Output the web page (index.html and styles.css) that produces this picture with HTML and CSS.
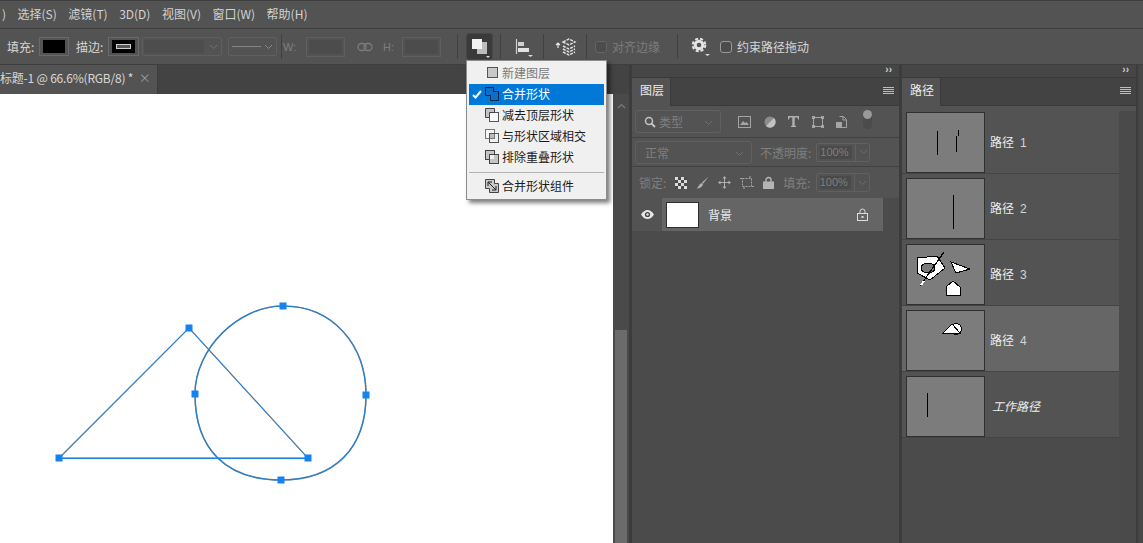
FILE: index.html
```html
<!DOCTYPE html>
<html lang="zh-CN">
<head>
    <meta charset="UTF-8">
    <title>Photoshop</title>
    <link rel="stylesheet" href="styles.css">
</head>
<body>

<div class="app">

    <!-- 菜单栏 -->
    <div class="menubar">
        <span>)</span>
        <span>选择(S)</span>
        <span>滤镜(T)</span>
        <span>3D(D)</span>
        <span>视图(V)</span>
        <span>窗口(W)</span>
        <span>帮助(H)</span>
    </div>

    <!-- 选项栏 -->
    <div class="optbar">
        <span class="opt_label">填充:</span>
        <span class="swatch fill_swatch"><i></i></span>
        <span class="opt_label stroke_label">描边:</span>
        <span class="swatch stroke_swatch"><i></i></span>
        <span class="combo width_combo"><b></b><svg width="9" height="6" viewBox="0 0 9 6"><path d="M1 1l3.500 3.500L8 1" fill="none" stroke="#737373"/></svg></span>
        <span class="combo line_combo"><em></em><svg width="9" height="6" viewBox="0 0 9 6"><path d="M1 1l3.500 3.500L8 1" fill="none" stroke="#8a8a8a"/></svg></span>
        <span class="sep sep_w"></span>
        <span class="dim_label w_label">W:</span>
        <span class="dim_input w_input"></span>
        <svg class="link_icon" width="16" height="10" viewBox="0 0 16 10"><g fill="none" stroke="#7c7c7c" stroke-width="1.300"><rect x="1" y="1.500" width="8" height="7" rx="3.500"/><rect x="7" y="1.500" width="8" height="7" rx="3.500"/></g></svg>
        <span class="dim_label h_label">H:</span>
        <span class="dim_input h_input"></span>
        <span class="sep sep_h"></span>
        <span class="tool_btn">
            <svg width="27" height="27" viewBox="0 0 27 27"><rect x="11" y="9" width="10" height="12" fill="#bdbdbd"/><rect x="6" y="6" width="10" height="10" fill="#f2f2f2"/><path d="M20 23h4l-2 2z" fill="#ddd"/></svg>
        </span>
        <span class="sep sep_a"></span>
        <svg class="align_icon" width="18" height="20" viewBox="0 0 18 20"><path d="M1.500 2v15" stroke="#cfcfcf" stroke-width="1.200"/><rect x="3" y="5" width="6" height="4" fill="#cfcfcf"/><rect x="3" y="11" width="11" height="4" fill="#e2e2e2"/><path d="M13 18h5l-2.500 2z" fill="#ddd"/></svg>
        <span class="sep sep_b"></span>
        <svg class="stack_icon" width="22" height="20" viewBox="0 0 22 20"><path d="M3 6v5M1 8l2-2 2 2" fill="none" stroke="#e6e6e6" stroke-width="1.200"/><g fill="none" stroke="#e2e2e2" stroke-width="1.400" stroke-dasharray="3 1"><path d="M8 5l6-3 6 3-6 3z"/><path d="M8 9l6 3 6-3"/><path d="M8 12l6 3 6-3"/><path d="M8 15l6 3 6-3"/></g></svg>
        <span class="sep sep_c"></span>
        <span class="check dis_check"></span>
        <span class="check_text dis_text">对齐边缘</span>
        <span class="sep sep_d"></span>
        <svg class="gear_icon" width="20" height="20" viewBox="0 0 20 20"><circle cx="8" cy="8" r="3.800" fill="none" stroke="#e4e4e4" stroke-width="3"/><circle cx="8" cy="8" r="6.300" fill="none" stroke="#e4e4e4" stroke-width="2" stroke-dasharray="3 2"/><path d="M14 17h5l-2.500 2z" fill="#ddd"/></svg>
        <span class="check on_check"></span>
        <span class="check_text">约束路径拖动</span>
    </div>

    <div class="workspace">

        <!-- 文档区 -->
        <div class="doc">
            <div class="doc_tabs">
                <div class="doc_tab">标题-1 @ 66.6%(RGB/8) * <span class="doc_close">×</span></div>
            </div>
            <div class="doc_body">
                <div class="canvas">
                    <svg class="drawing" width="613" height="449" viewBox="0 94 613 449">
                        <path d="M59 458L189 328 308 458Z" fill="none" stroke="#8a8a8a" stroke-width="1.300"/>
                        <path d="M283 306C333 306 366 345 366 395 366 448 335 480 281 480 226 480 195 449 195 394 195 349 238 306 283 306Z" fill="none" stroke="#8a8a8a" stroke-width="1.600"/>
                        <path d="M59 458.500H308" fill="none" stroke="#1c80dc" stroke-width="1.200"/>
                        <path d="M59 458.500L189 328 308 458.500" fill="none" stroke="#1c80dc" stroke-width=".9"/>
                        <path d="M283 306C333 306 366 345 366 395 366 448 335 480 281 480 226 480 195 449 195 394 195 349 238 306 283 306Z" fill="none" stroke="#1c80dc" stroke-width="1.100"/>
                        <g fill="#1583ef">
                            <rect x="185.500" y="324.500" width="7" height="7"/>
                            <rect x="55.500" y="454.500" width="7" height="7"/>
                            <rect x="304.500" y="454.500" width="7" height="7"/>
                            <rect x="279.500" y="302.500" width="7" height="7"/>
                            <rect x="362.500" y="391.500" width="7" height="7"/>
                            <rect x="277.500" y="476.500" width="7" height="7"/>
                            <rect x="191.500" y="390.500" width="7" height="7"/>
                        </g>
                    </svg>
                </div>
                <div class="doc_scroll">
                    <svg class="scroll_up" width="9" height="6" viewBox="0 0 9 6"><path d="M1 5l3.500-3.500L8 5" fill="none" stroke="#7a7a7a" stroke-width="1.200"/></svg>
                    <div class="scroll_thumb"></div>
                </div>
            </div>
        </div>

        <!-- 图层面板 -->
        <div class="panel layers_panel">
            <div class="dock_strip"><span>››</span></div>
            <div class="panel_tabs">
                <div class="panel_tab">图层</div>
                <div class="panel_menu"><i></i><i></i><i></i><i></i></div>
            </div>
            <div class="layer_opts">
                <div class="opt_row filter_row">
                    <div class="pick filter_pick">
                        <svg width="12" height="12" viewBox="0 0 12 12"><circle cx="5" cy="5" r="3.500" fill="none" stroke="#c4c4c4" stroke-width="1.500"/><path d="M7.500 7.500L11 11" stroke="#c4c4c4" stroke-width="2"/></svg>
                        <span>类型</span>
                        <svg class="pick_arrow" width="9" height="6" viewBox="0 0 9 6"><path d="M1 1l3.500 3.500L8 1" fill="none" stroke="#6e6e6e"/></svg>
                    </div>
                    <div class="filter_icons">
                        <svg width="13" height="12" viewBox="0 0 13 12"><rect x=".5" y=".5" width="12" height="11" fill="none" stroke="#a5a5a5"/><path d="M2 9l3-4 2 2 1.500-1L11 9z" fill="#a5a5a5"/></svg>
                        <svg width="12" height="12" viewBox="0 0 12 12"><circle cx="6" cy="6" r="5.500" fill="#8c8c8c"/><path d="M10 2A5.500 5.500 0 0 1 2 10z" fill="#c2c2c2"/></svg>
                        <svg width="11" height="11" viewBox="0 0 11 11"><path d="M0 0h11v3.500H10L9.500 1.500H6.700v8l1.300.5v1H3V10l1.300-.5v-8H1.500L1 3.500H0z" fill="#b0b0b0"/></svg>
                        <svg width="12" height="12" viewBox="0 0 12 12"><rect x="1.500" y="1.500" width="9" height="9" fill="none" stroke="#a5a5a5"/><g fill="#a5a5a5"><rect width="3" height="3"/><rect x="9" width="3" height="3"/><rect y="9" width="3" height="3"/><rect x="9" y="9" width="3" height="3"/></g></svg>
                        <svg width="11" height="12" viewBox="0 0 11 12"><path d="M3.500.5h4l3 3v8h-7" fill="none" stroke="#a5a5a5"/><path d="M7 1v3h3" fill="none" stroke="#a5a5a5"/><rect y="6" width="6" height="6" fill="#a5a5a5"/></svg>
                        <span class="filter_toggle"><i></i></span>
                    </div>
                </div>
                <div class="opt_row blend_row">
                    <div class="pick blend_pick">
                        <span>正常</span>
                        <svg class="pick_arrow" width="9" height="6" viewBox="0 0 9 6"><path d="M1 1l3.500 3.500L8 1" fill="none" stroke="#6e6e6e"/></svg>
                    </div>
                    <span class="dim_text">不透明度:</span>
                    <div class="percent"><span>100%</span><svg width="9" height="6" viewBox="0 0 9 6"><path d="M1 1l3.500 3.500L8 1" fill="none" stroke="#6e6e6e"/></svg></div>
                </div>
                <div class="opt_row lock_row">
                    <span class="dim_text">锁定:</span>
                    <svg class="checker" width="12" height="12" viewBox="0 0 12 12"><rect width="12" height="12" fill="#dcdcdc"/><g fill="#4a4a4a"><rect x="3" width="3" height="3"/><rect x="9" width="3" height="3"/><rect y="3" width="3" height="3"/><rect x="6" y="3" width="3" height="3"/><rect x="3" y="6" width="3" height="3"/><rect x="9" y="6" width="3" height="3"/><rect y="9" width="3" height="3"/><rect x="6" y="9" width="3" height="3"/></g></svg>
                    <svg width="13" height="13" viewBox="0 0 13 13"><path d="M12.500.5L6 6.500 7 8z" fill="#b0b0b0"/><path d="M5.500 7l1.500 1.500C6.500 11 3 12.800.5 12.500 2.500 11.500 2.500 8.500 5.500 7z" fill="#b0b0b0"/></svg>
                    <svg width="13" height="13" viewBox="0 0 13 13"><path d="M6.500 1v11M1 6.500h11" stroke="#b0b0b0"/><path d="M6.500 0l2 2.500h-4zM6.500 13l2-2.500h-4zM0 6.500l2.500 2v-4zM13 6.500l-2.500 2v-4z" fill="#b0b0b0"/></svg>
                    <svg width="14" height="13" viewBox="0 0 14 13"><rect x="2.500" y="2.500" width="9" height="8" fill="none" stroke="#a5a5a5" stroke-dasharray="2 1"/><path d="M0 2.500h2M12 10.500h2M4 11v2M10 0v2" stroke="#a5a5a5"/></svg>
                    <svg width="11" height="13" viewBox="0 0 11 13"><path d="M3 6V4a2.500 2.500 0 0 1 5 0v2" fill="none" stroke="#b4b4b4" stroke-width="1.400"/><rect y="5.500" width="11" height="7.500" fill="#b4b4b4"/></svg>
                    <span class="dim_text">填充:</span>
                    <div class="percent"><span>100%</span><svg width="9" height="6" viewBox="0 0 9 6"><path d="M1 1l3.500 3.500L8 1" fill="none" stroke="#6e6e6e"/></svg></div>
                </div>
            </div>
            <div class="layer_list">
                <div class="layer_item">
                    <div class="layer_eye">
                        <svg width="13" height="9" viewBox="0 0 13 9"><path d="M0 4.500C2 1.500 4 0 6.500 0S11 1.500 13 4.500C11 7.500 9 9 6.500 9S2 7.500 0 4.500z" fill="#e6e6e6"/><circle cx="6.500" cy="4.500" r="2.600" fill="#444"/><circle cx="6.500" cy="4.500" r="1.200" fill="#e6e6e6"/></svg>
                    </div>
                    <div class="layer_row">
                        <span class="layer_thumb"></span>
                        <span class="layer_name">背景</span>
                        <svg class="layer_lock" width="11" height="13" viewBox="0 0 11 13"><path d="M3 5.500V3.500a2.500 2.500 0 0 1 5 0v2" fill="none" stroke="#dcdcdc"/><rect x=".5" y="5.500" width="10" height="7" fill="none" stroke="#dcdcdc"/><rect x="4.500" y="8" width="2" height="2" fill="#dcdcdc"/></svg>
                    </div>
                </div>
            </div>
        </div>

        <!-- 路径面板 -->
        <div class="panel paths_panel">
            <div class="dock_strip"><span>››</span></div>
            <div class="panel_tabs">
                <div class="panel_tab">路径</div>
                <div class="panel_menu"><i></i><i></i><i></i><i></i></div>
            </div>
            <div class="path_body">
                <div class="path_list">
                    <div class="path_row">
                        <svg class="path_thumb" width="77" height="59" viewBox="1 1 77 59"><path d="M31.500 19v24M50.500 24v16M52.500 18v6" stroke="#000"/></svg>
                        <span class="path_name">路径<span class="path_num">1</span></span>
                    </div>
                    <div class="path_row">
                        <svg class="path_thumb" width="77" height="59" viewBox="1 1 77 59"><path d="M47.500 17v34" stroke="#000"/></svg>
                        <span class="path_name">路径<span class="path_num">2</span></span>
                    </div>
                    <div class="path_row">
                        <svg class="path_thumb" width="77" height="59" viewBox="1 1 77 59">
                            <path d="M11 14l20-2 8 12-15 12-13-7z" fill="#fff" stroke="#000"/>
                            <ellipse cx="22" cy="24" rx="7" ry="5" fill="#7a7a7a" stroke="#000"/>
                            <path d="M38 8L14 42" stroke="#000" stroke-width="1.200"/>
                            <path d="M18 37l-3 4" stroke="#fff" stroke-width="2"/>
                            <path d="M45 18l19 7-14 4z" fill="#fff" stroke="#000"/>
                            <path d="M40 51v-8l7-6 7 6v8z" fill="#fff" stroke="#000"/>
                        </svg>
                        <span class="path_name">路径<span class="path_num">3</span></span>
                    </div>
                    <div class="path_row path_active">
                        <svg class="path_thumb" width="77" height="59" viewBox="1 1 77 59">
                            <circle cx="50" cy="19" r="5.500" fill="#fff" stroke="#000"/>
                            <path d="M37 23l9-9 8 9z" fill="#fff" stroke="#000"/>
                        </svg>
                        <span class="path_name">路径<span class="path_num">4</span></span>
                    </div>
                    <div class="path_row">
                        <svg class="path_thumb" width="77" height="59" viewBox="1 1 77 59"><path d="M21.500 17v24" stroke="#000"/></svg>
                        <span class="path_name path_work">工作路径</span>
                    </div>
                </div>
                <div class="path_scroll"></div>
            </div>
        </div>
        <div class="edge_strip"></div>
    </div>

    <!-- 路径操作下拉菜单 -->
    <div class="shape_menu">
        <div class="menu_item menu_dis">
            <svg width="14" height="14" viewBox="0 0 14 14"><rect x="2.500" y="1.500" width="10" height="10" fill="#c8c8c8" stroke="#555"/></svg>
            <span>新建图层</span>
        </div>
        <div class="menu_item menu_on">
            <svg class="menu_check" width="10" height="9" viewBox="0 0 10 9"><path d="M1 5l2.500 2.500L9 1" fill="none" stroke="#fff" stroke-width="2"/></svg>
            <svg width="14" height="14" viewBox="0 0 14 14"><path d="M.5.500h8v4h5v9h-8v-5h-5z" fill="#0a6fc8" stroke="#04223f"/></svg>
            <span>合并形状</span>
        </div>
        <div class="menu_item">
            <svg width="14" height="14" viewBox="0 0 14 14"><rect x="4.500" y="4.500" width="9" height="9" fill="#fafafa" stroke="#555"/><path d="M.5.500h9v4h-5v5h-4z" fill="#c4c4c4" stroke="#444"/></svg>
            <span>减去顶层形状</span>
        </div>
        <div class="menu_item">
            <svg width="14" height="14" viewBox="0 0 14 14"><rect x=".5" y=".5" width="9" height="9" fill="#f5f5f5" stroke="#777"/><rect x="4.500" y="4.500" width="9" height="9" fill="none" stroke="#555"/><rect x="5" y="5" width="4" height="4" fill="#bbb"/></svg>
            <span>与形状区域相交</span>
        </div>
        <div class="menu_item">
            <svg width="14" height="14" viewBox="0 0 14 14"><rect x=".5" y=".5" width="9" height="9" fill="#c4c4c4" stroke="#444"/><rect x="4.500" y="4.500" width="9" height="9" fill="#c4c4c4" stroke="#444"/><rect x="5" y="5" width="4" height="4" fill="#f0f0f0"/></svg>
            <span>排除重叠形状</span>
        </div>
        <div class="menu_line"></div>
        <div class="menu_item">
            <svg width="14" height="14" viewBox="0 0 14 14"><path d="M.5.500h9v4h4v9h-9v-4h-4z" fill="#c8c8c8" stroke="#444"/><path d="M3 3l8 8M3 7V3h4M11 7v4H7" fill="none" stroke="#222"/></svg>
            <span>合并形状组件</span>
        </div>
    </div>

</div>

</body>
</html>
```

FILE: styles.css
```css
*{
    margin: 0;
    padding: 0;
    box-sizing: border-box;
}
body{
    background-color: #535353;
    font-family: "Noto Sans CJK SC", "Liberation Sans", sans-serif;
    font-size: 12px;
    overflow: hidden;
}
.app{
    width: 1143px;
    height: 543px;
    position: relative;
    overflow: hidden;
    display: flex;
    flex-direction: column;
}

/* 菜单栏 */
.menubar{
    height: 29px;
    padding: 0 0 1px 2px;
    display: flex;
    align-items: center;
    gap: 11.500px;
    background-color: #535353;
    border-top: 1px solid #3f3f3f;
    border-bottom: 1px solid #3e3e3e;
    color: #d2d2d2;
    line-height: 16px;
}

/* 选项栏 */
.optbar{
    height: 36px;
    padding-left: 7px;
    display: flex;
    align-items: center;
    background-color: #535353;
    color: #d6d6d6;
    border-bottom: 1px solid #3e3e3e;
    line-height: 16px;
}
.opt_label{
    width: 29px;
    font-size: 12px;
}
.stroke_label{
    margin-left: 7px;
}
.swatch{
    height: 19px;
    padding: 2px 3px;
    border: 1px solid #6a6a6a;
    display: block;
}
.swatch i{
    display: block;
    height: 100%;
    background-color: #000;
}
.fill_swatch{
    width: 30px;
    margin-left: 3px;
}
.stroke_swatch{
    width: 31px;
    margin-left: 3px;
}
.stroke_swatch i{
    box-shadow: inset 0 0 0 4px #000, inset 0 0 0 5px #cfcfcf, inset 0 0 0 9px #555;
}
.combo{
    height: 19px;
    display: flex;
    align-items: center;
    border: 1px solid #5f5f5f;
    border-radius: 2px;
}
.width_combo{
    width: 80px;
    margin-left: 3px;
    padding: 2px 0 2px 1px;
}
.width_combo b{
    display: block;
    width: 60px;
    height: 100%;
    background-color: #4d4d4d;
    margin-right: 5px;
    box-shadow: 4px 0 0 #535353;
}
.line_combo{
    width: 49px;
    margin-left: 6px;
    padding-left: 3px;
    gap: 3px;
}
.line_combo em{
    display: block;
    width: 29px;
    height: 1px;
    background-color: #858585;
}
.sep{
    width: 1px;
    height: 25px;
    background-color: #404040;
    flex-shrink: 0;
}
.sep_w{
    margin-left: 4px;
}
.dim_label{
    color: #7e7e7e;
    width: 12px;
    font-family: "Liberation Sans", sans-serif;
    font-size: 11px;
}
.w_label{
    margin-left: 1px;
    width: 14px;
}
.dim_input{
    height: 20px;
    border: 1px solid #5f5f5f;
    padding: 2px;
    background-clip: content-box;
    background-color: #4c4c4c;
}
.w_input{
    width: 39px;
    margin-left: 9px;
}
.link_icon{
    margin-left: 12px;
}
.h_label{
    margin-left: 10px;
}
.h_input{
    width: 39px;
    margin-left: 7px;
}
.sep_h{
    margin-left: 16px;
}
.tool_btn{
    width: 27px;
    height: 27px;
    margin-left: 8px;
    background-color: #3a3a3a;
    border: 1px solid #474747;
    border-radius: 3px;
    display: block;
}
.tool_btn svg{
    display: block;
    margin: -1px;
}
.sep_a{
    margin-left: 7px;
}
.align_icon{
    margin-left: 14px;
}
.sep_b{
    margin-left: 10px;
}
.stack_icon{
    margin-left: 11px;
}
.sep_c{
    margin-left: 9px;
}
.check{
    width: 12px;
    height: 12px;
    border: 1px solid #9a9a9a;
    border-radius: 3px;
    flex-shrink: 0;
}
.dis_check{
    margin-left: 8px;
    border-color: #646464;
    background-color: #4c4c4c;
}
.check_text{
    margin-left: 5px;
    white-space: nowrap;
}
.dis_text{
    color: #7c7c7c;
}
.sep_d{
    margin-left: 17px;
}
.gear_icon{
    margin-left: 13px;
}
.on_check{
    margin-left: 9px;
    background-color: #4c4c4c;
}

/* 工作区 */
.workspace{
    flex: 1;
    display: flex;
    min-height: 0;
    background-color: #3c3c3c;
}
.doc{
    width: 629px;
    display: flex;
    flex-direction: column;
    margin-right: 3px;
}
.doc_tabs{
    height: 29px;
    background-color: #434343;
}
.doc_tab{
    width: 158px;
    height: 29px;
    padding-top: 4px;
    background-color: #535353;
    border-right: 1px solid #3e3e3e;
    color: #d8d8d8;
    line-height: 18px;
    white-space: nowrap;
    letter-spacing: -.2px;
}
.doc_close{
    margin-left: 3px;
    color: #9a9a9a;
    font-size: 12px;
}
.doc_body{
    flex: 1;
    display: flex;
    min-height: 0;
}
.canvas{
    width: 613px;
    background-color: #fff;
}
.drawing{
    display: block;
}
.doc_scroll{
    flex: 1;
    padding: 9px 2px 0;
    background-color: #4a4a4a;
    display: flex;
    flex-direction: column;
    align-items: center;
}
.scroll_up{
    flex-shrink: 0;
}
.scroll_thumb{
    width: 12px;
    height: 213px;
    margin-top: 221px;
    background-color: #6b6b6b;
}

/* 面板 */
.panel{
    display: flex;
    flex-direction: column;
    background-color: #4b4b4b;
}
.layers_panel{
    width: 267px;
}
.paths_panel{
    width: 234px;
    margin-left: 3px;
}
.edge_strip{
    flex: 1;
    margin-left: 2px;
    background-color: #474747;
}
.dock_strip{
    height: 12px;
    padding-right: 7px;
    background-color: #464646;
    color: #d0d0d0;
    font-size: 10px;
    line-height: 9px;
    text-align: right;
    font-family: "Liberation Sans", sans-serif;
    font-weight: bold;
}
.panel_tabs{
    height: 29px;
    display: flex;
    justify-content: space-between;
    background-color: #434343;
    border-top: 1px solid #3a3a3a;
    border-bottom: 1px solid #3a3a3a;
}
.panel_tab{
    width: 39px;
    height: 28px;
    padding-left: 8px;
    background-color: #535353;
    color: #ececec;
    line-height: 24px;
    border-right: 1px solid #3a3a3a;
}
.panel_menu{
    width: 11px;
    margin: 9px 5px 0 0;
    display: flex;
    flex-direction: column;
    gap: 1px;
}
.panel_menu i{
    display: block;
    height: 1px;
    background-color: #bdbdbd;
}

/* 图层面板选项 */
.layer_opts{
    background-color: #535353;
}
.opt_row{
    padding-left: 3px;
    display: flex;
    align-items: center;
    border-bottom: 1px solid #424242;
}
.filter_row{
    height: 32px;
}
.blend_row{
    height: 29px;
}
.lock_row{
    height: 31px;
    padding-left: 7px;
    border-bottom: 0;
}
.pick{
    height: 23px;
    display: flex;
    align-items: center;
    border: 1px solid #606060;
    border-radius: 3px;
    color: #7f7f7f;
    position: relative;
}
.pick_arrow{
    position: absolute;
    right: 7px;
    top: 9px;
}
.filter_pick{
    width: 86px;
    padding-left: 8px;
    gap: 3px;
}
.blend_pick{
    width: 117px;
    padding-left: 9px;
}
.filter_icons{
    margin-left: 17px;
    display: flex;
    align-items: center;
    gap: 12.500px;
}
.filter_toggle{
    width: 9px;
    height: 19px;
    margin: -4px 0 0 3px;
    background-color: #4b4b4b;
    border-radius: 5px;
    display: block;
}
.filter_toggle i{
    display: block;
    width: 9px;
    height: 9px;
    border-radius: 50%;
    background-color: #9a9a9a;
}
.dim_text{
    color: #7f7f7f;
    white-space: nowrap;
}
.blend_row .dim_text{
    margin-left: 8px;
}
.percent{
    width: 54px;
    height: 19px;
    margin-left: 5px;
    padding-left: 3px;
    display: flex;
    align-items: center;
    border: 1px solid #606060;
    border-radius: 2px;
    color: #7f7f7f;
    font-size: 11px;
    font-family: "Liberation Sans", sans-serif;
}
.percent span{
    width: 32px;
    height: 13px;
    line-height: 13px;
    background-color: #4a4a4a;
    margin-right: 3px;
}
.percent svg{
    box-sizing: content-box;
    padding: 6px 2px 6px 3px;
    border-left: 1px solid #606060;
}
.lock_row svg{
    margin-left: 9px;
    flex-shrink: 0;
}
.lock_row .percent svg{
    margin-left: 0;
}
.lock_row svg + .dim_text{
    margin-left: 9px;
}
.layer_list{
    flex: 1;
    background-color: #4b4b4b;
}
.layer_item{
    height: 33px;
    display: flex;
    background-color: #535353;
    width: 251px;
}
.layer_eye{
    width: 30px;
    display: flex;
    align-items: center;
    justify-content: center;
}
.layer_row{
    flex: 1;
    padding-left: 4px;
    display: flex;
    align-items: center;
    background-color: #656565;
}
.layer_thumb{
    width: 33px;
    height: 26px;
    background-color: #fff;
    border: 1px solid #2f2f2f;
    display: block;
}
.layer_name{
    margin-left: 9px;
    color: #ececec;
}
.layer_lock{
    margin-left: auto;
    margin-right: 15px;
}

/* 路径面板 */
.path_body{
    flex: 1;
    display: flex;
    min-height: 0;
}
.path_list{
    width: 217px;
}
.path_row{
    height: 66px;
    padding: 4px 0 0 4px;
    display: flex;
    align-items: flex-start;
    background-color: #535353;
    border-bottom: 1px solid #444;
}
.path_row:first-child{
    height: 68px;
    padding-top: 6px;
}
.path_active{
    background-color: #666;
}
.path_thumb{
    box-sizing: content-box;
    flex-shrink: 0;
    background-color: #7c7c7c;
    border: 1px solid #303030;
    shape-rendering: crispEdges;
}
.path_name{
    align-self: center;
    margin: -2px 0 0 5px;
    color: #ececec;
    white-space: nowrap;
}
.path_num{
    margin-left: 6px;
    font-family: "Liberation Sans", sans-serif;
    color: #d4d4d4;
}
.path_work{
    margin: -3px 0 0 7px;
    font-style: italic;
}
.path_scroll{
    flex: 1;
    margin-top: 0;
    background-color: #4a4a4a;
    border-top: 5px solid #535353;
}

/* 下拉菜单 */
.shape_menu{
    position: absolute;
    left: 466px;
    top: 60px;
    width: 141px;
    height: 140px;
    padding: 2px;
    background-color: #f0f0f0;
    border: 1px solid #8c8c8c;
    box-shadow: 3px 3px 4px rgba(0,0,0,.5);
    color: #1a1a1a;
}
.menu_item{
    height: 21px;
    padding: 0 0 2px 16px;
    display: flex;
    align-items: center;
    gap: 3px;
    line-height: 16px;
    position: relative;
}
.menu_dis{
    color: #7a7a7a;
}
.menu_on{
    background-color: #0078d7;
    color: #fff;
}
.menu_check{
    position: absolute;
    left: 3px;
    top: 6px;
}
.menu_line{
    height: 1px;
    margin: 4px 0 3px;
    background-color: #b4b4b4;
}
```
